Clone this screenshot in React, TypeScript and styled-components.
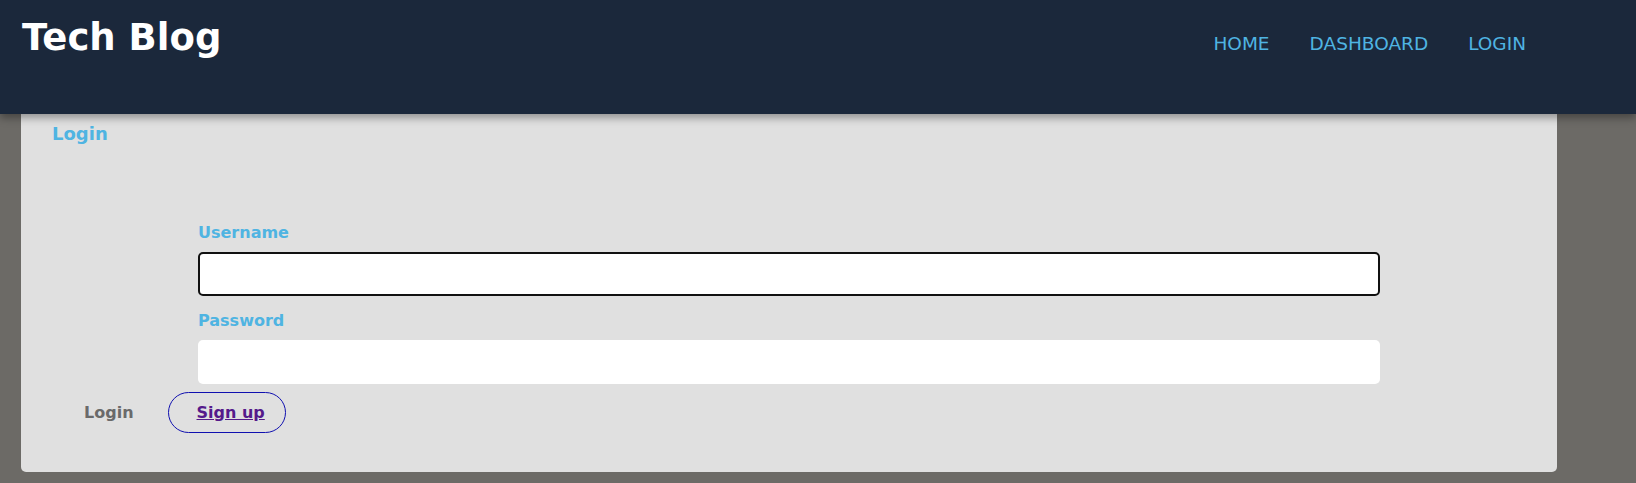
import styled, { createGlobalStyle } from 'styled-components';

const GlobalStyle = createGlobalStyle`
  html, body {
    margin: 0;
    padding: 0;
    background: #6c6a66;
    font-family: "DejaVu Sans", Verdana, sans-serif;
  }
`;

const Header = styled.header`
  position: relative;
  z-index: 1;
  display: flex;
  justify-content: space-between;
  align-items: flex-start;
  height: 114px;
  padding: 0 110px 0 22px;
  box-sizing: border-box;
  background: #1b283b;
  box-shadow: 0 4px 8px rgba(0, 0, 0, 0.35);
`;

const SiteTitle = styled.h1`
  margin: 16px 0 0;
  font-size: 37px;
  line-height: 43px;
  font-weight: bold;
  color: #ffffff;
`;

const Nav = styled.nav`
  display: flex;
  gap: 40px;
  margin-top: 33px;
`;

const NavLink = styled.a`
  font-size: 18.5px;
  line-height: 21px;
  color: #4fb4e2;
  text-decoration: none;
`;

const Card = styled.main`
  width: 1536px;
  margin-left: 21px;
  padding: 9px 31px 39px;
  box-sizing: border-box;
  background: #e0e0e0;
  border-radius: 0 0 5px 5px;
`;

const CardTitle = styled.h2`
  margin: 0;
  font-size: 18px;
  line-height: 21px;
  font-weight: bold;
  color: #4fb4e2;
`;

const Form = styled.form`
  display: flex;
  flex-direction: column;
  margin: 79px 146px 0;
`;

const Label = styled.label<{ $spaced?: boolean }>`
  margin: ${({ $spaced }) => ($spaced ? '15px' : '0')} 0 10px;
  font-size: 16px;
  line-height: 19px;
  font-weight: bold;
  color: #4fb4e2;
`;

const Input = styled.input`
  height: 44px;
  padding: 0 6px;
  box-sizing: border-box;
  border: 2px solid transparent;
  border-radius: 5px;
  background: #ffffff;
  font-family: inherit;
  font-size: 16px;
  color: #000;

  &:focus {
    outline: none;
    border-color: #111111;
  }
`;

const Actions = styled.div`
  display: flex;
  align-items: center;
  gap: 5px;
  margin: 8px 0 0 3px;
`;

const ActionButton = styled.a<{ $outlined?: boolean }>`
  display: flex;
  align-items: center;
  height: 41px;
  padding: ${({ $outlined }) => ($outlined ? '0 20px 0 28px' : '0 28px')};
  box-sizing: border-box;
  border: 1px solid ${({ $outlined }) => ($outlined ? '#1010b0' : 'transparent')};
  border-radius: 21px;
  font-size: 16px;
  font-weight: bold;
  color: ${({ $outlined }) => ($outlined ? '#551a8b' : '#6a6a6a')};
  text-decoration: ${({ $outlined }) => ($outlined ? 'underline' : 'none')};
  cursor: pointer;
`;

export default function App() {
  return (
    <>
      <GlobalStyle />
      <Header>
        <SiteTitle>Tech Blog</SiteTitle>
        <Nav>
          <NavLink href="#">HOME</NavLink>
          <NavLink href="#">DASHBOARD</NavLink>
          <NavLink href="#">LOGIN</NavLink>
        </Nav>
      </Header>
      <Card>
        <CardTitle>Login</CardTitle>
        <Form onSubmit={(e) => e.preventDefault()}>
          <Label htmlFor="username">Username</Label>
          <Input id="username" type="text" autoFocus />
          <Label htmlFor="password" $spaced>
            Password
          </Label>
          <Input id="password" type="password" />
        </Form>
        <Actions>
          <ActionButton>Login</ActionButton>
          <ActionButton $outlined href="#">
            Sign up
          </ActionButton>
        </Actions>
      </Card>
    </>
  );
}
